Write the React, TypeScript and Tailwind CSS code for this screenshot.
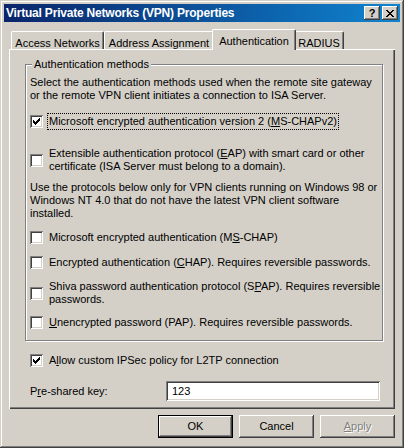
import React from 'react'

// classic 3D bevels
const raised =
  'shadow-[inset_-1px_-1px_#404040,inset_1px_1px_#ffffff,inset_-2px_-2px_#808080,inset_2px_2px_#d4d0c8]'
const sunken =
  'shadow-[inset_1px_1px_#808080,inset_-1px_-1px_#ffffff,inset_2px_2px_#404040,inset_-2px_-2px_#d4d0c8]'

const CHECK_ROWS: [number, number][][] = [
  [[6, 1]],
  [[5, 2]],
  [[0, 1], [4, 3]],
  [[0, 2], [3, 3]],
  [[0, 5]],
  [[1, 3]],
  [[2, 1]],
]

const CheckBox = ({ checked = false }: { checked?: boolean }) => (
  <span className={`w-[13px] h-[13px] shrink-0 bg-white ${sunken}`}>
    {checked && (
      <svg width="13" height="13" viewBox="0 0 13 13" shapeRendering="crispEdges">
        {CHECK_ROWS.map((row, y) =>
          row.map(([x, w]) => <rect key={`${y}-${x}`} x={3 + x} y={3 + y} width={w} height={1} fill="#000" />)
        )}
      </svg>
    )}
  </span>
)

const Option = ({
  checked,
  focused,
  className = '',
  children,
}: {
  checked?: boolean
  focused?: boolean
  className?: string
  children: React.ReactNode
}) => (
  <div className={`flex items-center ${className}`}>
    <CheckBox checked={checked} />
    <span
      className={`ml-[4px] px-px leading-[13px] border whitespace-nowrap ${
        focused ? 'border-dotted border-black py-px' : 'border-transparent'
      }`}
    >
      {children}
    </span>
  </div>
)

const U = ({ children }: { children: React.ReactNode }) => <span className="underline">{children}</span>

const tabs = [
  { label: 'Access Networks', w: 'w-[93px]' },
  { label: 'Address Assignment', w: 'w-[110px]' },
  { label: 'Authentication', w: 'w-[84px]', active: true },
  { label: 'RADIUS', w: 'w-[50px]' },
]

export default function App() {
  return (
    <div
      className={`w-[404px] h-[448px] p-[4px] bg-[#d4d0c8] text-[11px] text-black [font-family:'Liberation_Sans',Arial,sans-serif] shadow-[inset_-1px_-1px_#404040,inset_1px_1px_#d4d0c8,inset_-2px_-2px_#808080,inset_2px_2px_#ffffff] flex flex-col`}
    >
      {/* title bar */}
      <div className="h-[18px] flex items-center bg-linear-to-r from-[#0a246a] to-[#1084d0] pl-[2px] pr-[2px]">
        <span className="flex-1 font-bold text-[12px] tracking-[-0.2px] text-white whitespace-nowrap">
          Virtual Private Networks (VPN) Properties
        </span>
        <button className={`w-[16px] h-[14px] bg-[#d4d0c8] ${raised} flex items-center justify-center font-bold text-[11px] leading-none pt-px`}>
          ?
        </button>
        <button className={`ml-[2px] w-[16px] h-[14px] bg-[#d4d0c8] ${raised} flex items-center justify-center`}>
          <svg width="8" height="7" viewBox="0 0 8 7" shapeRendering="crispEdges">
            <path
              d="M0 0h2v1H0zM6 0h2v1H6zM1 1h2v1H1zM5 1h2v1H5zM2 2h4v1H2zM3 3h2v1H3zM2 4h4v1H2zM1 5h2v1H1zM5 5h2v1H5zM0 6h2v1H0zM6 6h2v1H6z"
              fill="#000"
            />
          </svg>
        </button>
      </div>

      <div className="pl-[5px] pt-[7px]">
        {/* tab strip */}
        <div className="h-[20px] flex items-end pl-[2px]">
          {tabs.map(t =>
            t.active ? (
              <div
                key={t.label}
                className={`relative z-10 -mx-[2px] -mb-px h-[21px] ${t.w} bg-[#d4d0c8] border-l border-t border-r border-l-white border-t-white border-r-[#404040] rounded-t-[2px] shadow-[inset_-1px_0_#808080] flex justify-center pt-[3px] whitespace-nowrap`}
              >
                {t.label}
              </div>
            ) : (
              <div
                key={t.label}
                className={`h-[18px] ${t.w} border-l border-t border-r border-l-white border-t-white border-r-[#404040] rounded-t-[2px] shadow-[inset_-1px_0_#808080] flex justify-center pt-[3px] whitespace-nowrap`}
              >
                {t.label}
              </div>
            )
          )}
        </div>

        {/* tab page */}
        <div className="w-[386px] h-[360px] pl-[16px] pt-[15px] shadow-[inset_1px_1px_#ffffff,inset_-1px_-1px_#404040,inset_-2px_-2px_#808080]">
          <div className="relative w-[358px] h-[277px] border border-[#808080] shadow-[1px_1px_0_#ffffff,inset_1px_1px_0_#ffffff] pl-[4px] flex flex-col">
            <span className="absolute -top-[7px] left-[6px] px-[2px] bg-[#d4d0c8] leading-[13px] whitespace-nowrap">
              Authentication methods
            </span>
            <p className="mt-[11px] leading-[13px] whitespace-nowrap">
              Select the authentication methods used when the remote site gateway
              <br />
              or the remote VPN client initiates a connection to ISA Server.
            </p>
            <Option checked focused className="mt-[11px]">
              Microsoft encrypted authentication version 2 (<U>M</U>S-CHAPv2)
            </Option>
            <Option className="mt-[16px]">
              Extensible authentication protocol (<U>E</U>AP) with smart card or other
              <br />
              certificate (ISA Server must belong to a domain).
            </Option>
            <p className="mt-[7px] leading-[13px] whitespace-nowrap">
              Use the protocols below only for VPN clients running on Windows 98 or
              <br />
              Windows NT 4.0 that do not have the latest VPN client software
              <br />
              installed.
            </p>
            <Option className="mt-[10px]">
              Microsoft encrypted authentication (M<U>S</U>-CHAP)
            </Option>
            <Option className="mt-[10px]">
              Encrypted authentication (<U>C</U>HAP). Requires reversible passwords.
            </Option>
            <Option className="mt-[9px]">
              Shiva password authentication protocol (S<U>P</U>AP). Requires reversible
              <br />
              passwords.
            </Option>
            <Option className="mt-[8px]">
              <U>U</U>nencrypted password (PAP). Requires reversible passwords.
            </Option>
          </div>

          <Option checked className="mt-[12px] ml-[5px]">
            A<U>l</U>low custom IPSec policy for L2TP connection
          </Option>

          <div className="mt-[13px] ml-[5px] flex items-center">
            <span className="w-[136px] whitespace-nowrap">
              P<U>r</U>e-shared key:
            </span>
            <div className={`w-[214px] h-[20px] bg-white ${sunken} flex items-center pl-[6px]`}>123</div>
          </div>
        </div>

        {/* dialog buttons */}
        <div className="w-[386px] mt-[6px] flex justify-end gap-[6px]">
          <button
            className={`w-[75px] h-[23px] bg-[#d4d0c8] shadow-[inset_0_0_0_1px_#000000,inset_-2px_-2px_#404040,inset_2px_2px_#ffffff,inset_-3px_-3px_#808080] flex items-center justify-center`}
          >
            OK
          </button>
          <button className={`w-[75px] h-[23px] bg-[#d4d0c8] ${raised} flex items-center justify-center`}>Cancel</button>
          <button
            className={`w-[75px] h-[23px] bg-[#d4d0c8] ${raised} flex items-center justify-center text-[#808080] [text-shadow:1px_1px_#ffffff]`}
          >
            <U>A</U>pply
          </button>
        </div>
      </div>
    </div>
  )
}
